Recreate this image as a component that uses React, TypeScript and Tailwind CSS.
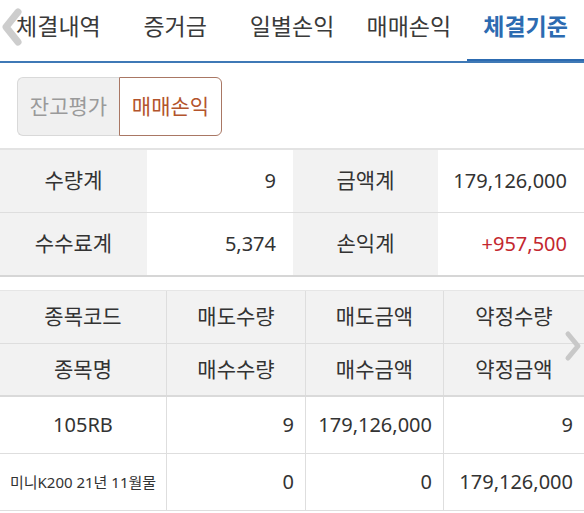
import React from 'react';

const tabs = ['체결내역', '증거금', '일별손익', '매매손익', '체결기준'];

const font = { fontFamily: '"Noto Sans", "Noto Sans CJK KR", sans-serif' };

export default function App() {
  const active = 4;

  return (
    <div className="relative w-[584px] h-[513px] overflow-hidden bg-white text-[#333]" style={font}>
      {/* Tab bar */}
      <div className="grid grid-cols-5 h-[63px] border-b-2 border-[#3f79b6]">
        {tabs.map((t, i) => (
          <div
            key={t}
            className={
              i === active
                ? 'flex justify-center pt-[9px] text-[23px] leading-[34px] font-bold text-[#2c6bb1] border-b-2 border-[#2c6bb1]'
                : 'flex justify-center pt-[9px] text-[23px] leading-[34px] text-[#3a3a3a]'
            }
          >
            {t}
          </div>
        ))}
      </div>

      {/* Left scroll chevron */}
      <svg className="absolute left-[1px] top-[8px]" width="22" height="38" viewBox="0 0 22 38">
        <polyline points="17,4 5,19 17,34" fill="none" stroke="#c4c4c4" strokeWidth="7" strokeLinecap="round" strokeLinejoin="round" opacity="0.85" />
      </svg>

      {/* Toggle */}
      <div className="flex ml-[17px] mt-[14px] h-[59px] w-[205px]">
        <div className="flex-1 flex items-center justify-center bg-[#f0f0f0] border border-[#d9d9d9] border-r-0 rounded-l-[6px] text-[21px] text-[#9a9a9a]">
          잔고평가
        </div>
        <div className="flex-1 flex items-center justify-center bg-white border border-[#a97764] rounded-r-[6px] text-[21px] text-[#b3542c]">
          매매손익
        </div>
      </div>

      {/* Summary */}
      <div className="mt-[12px] border-t-2 border-[#e3e3e3] border-b-2 border-b-[#d6d6d6] text-[20px]">
        <div className="grid grid-cols-[147px_146px_145px_146px] h-[63px] border-b border-[#dedede]">
          <div className="flex items-center justify-center bg-[#f2f2f2] text-[21px]">수량계</div>
          <div className="flex items-center justify-end pr-[17px]">9</div>
          <div className="flex items-center justify-center bg-[#f2f2f2] text-[21px]">금액계</div>
          <div className="flex items-center justify-end pr-[17px]">179,126,000</div>
        </div>
        <div className="grid grid-cols-[147px_146px_145px_146px] h-[62px]">
          <div className="flex items-center justify-center bg-[#f2f2f2] text-[21px]">수수료계</div>
          <div className="flex items-center justify-end pr-[17px]">5,374</div>
          <div className="flex items-center justify-center bg-[#f2f2f2] text-[21px]">손익계</div>
          <div className="flex items-center justify-end pr-[17px] text-[#c3272f]">+957,500</div>
        </div>
      </div>

      {/* Detail table */}
      <div className="mt-[13px] border-t border-[#e6e6e6] text-[20px]">
        <div className="grid grid-cols-[167px_139px_138px_140px] h-[53px] bg-[#f2f2f2] border-b border-[#dedede] text-[21px]">
          <div className="flex items-center justify-center border-r border-[#dedede]">종목코드</div>
          <div className="flex items-center justify-center border-r border-[#dedede]">매도수량</div>
          <div className="flex items-center justify-center border-r border-[#dedede]">매도금액</div>
          <div className="flex items-center justify-center">약정수량</div>
        </div>
        <div className="grid grid-cols-[167px_139px_138px_140px] h-[53px] bg-[#f2f2f2] border-b-2 border-[#dadada] text-[21px]">
          <div className="flex items-center justify-center border-r border-[#dedede]">종목명</div>
          <div className="flex items-center justify-center border-r border-[#dedede]">매수수량</div>
          <div className="flex items-center justify-center border-r border-[#dedede]">매수금액</div>
          <div className="flex items-center justify-center">약정금액</div>
        </div>
        <div className="grid grid-cols-[167px_139px_138px_140px] h-[57px] border-b border-[#dedede]">
          <div className="flex items-center justify-center border-r border-[#dedede]">105RB</div>
          <div className="flex items-center justify-end pr-[11px] border-r border-[#dedede]">9</div>
          <div className="flex items-center justify-end pr-[11px] border-r border-[#dedede]">179,126,000</div>
          <div className="flex items-center justify-end pr-[11px]">9</div>
        </div>
        <div className="grid grid-cols-[167px_139px_138px_140px] h-[57px] border-b border-[#dedede]">
          <div className="flex items-center justify-center border-r border-[#dedede] text-[15px]">미니K200 21년 11월물</div>
          <div className="flex items-center justify-end pr-[11px] border-r border-[#dedede]">0</div>
          <div className="flex items-center justify-end pr-[11px] border-r border-[#dedede]">0</div>
          <div className="flex items-center justify-end pr-[11px]">179,126,000</div>
        </div>
      </div>

      {/* Right scroll chevron */}
      <svg className="absolute right-[2px] top-[330px]" width="18" height="32" viewBox="0 0 18 32">
        <polyline points="4,4 14,16 4,28" fill="none" stroke="#c8c8c8" strokeWidth="5" strokeLinecap="round" strokeLinejoin="round" />
      </svg>
    </div>
  );
}
